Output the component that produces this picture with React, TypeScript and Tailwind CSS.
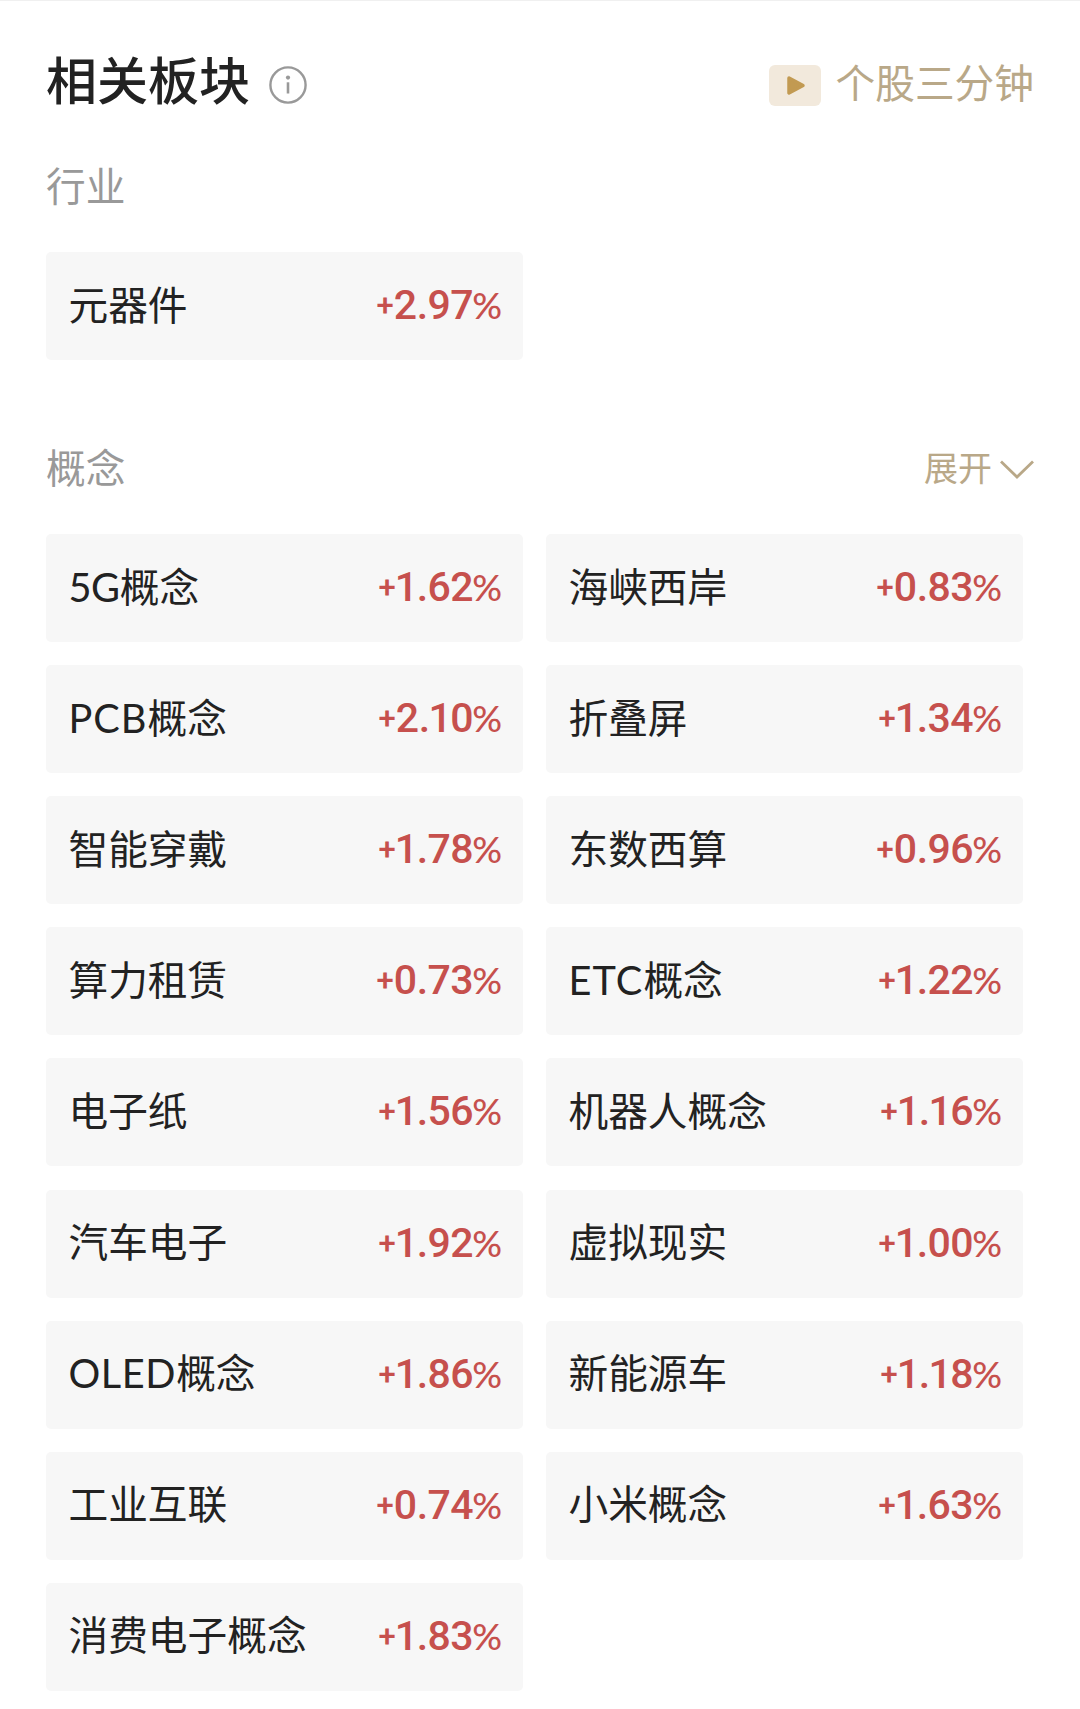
type Sector = { prefix?: string; name: string; change: string };

const industries: Sector[] = [{ name: '元器件', change: '2.97' }];

const concepts: Sector[] = [
  { prefix: '5G', name: '概念', change: '1.62' },
  { name: '海峡西岸', change: '0.83' },
  { prefix: 'PCB', name: '概念', change: '2.10' },
  { name: '折叠屏', change: '1.34' },
  { name: '智能穿戴', change: '1.78' },
  { name: '东数西算', change: '0.96' },
  { name: '算力租赁', change: '0.73' },
  { prefix: 'ETC', name: '概念', change: '1.22' },
  { name: '电子纸', change: '1.56' },
  { name: '机器人概念', change: '1.16' },
  { name: '汽车电子', change: '1.92' },
  { name: '虚拟现实', change: '1.00' },
  { prefix: 'OLED', name: '概念', change: '1.86' },
  { name: '新能源车', change: '1.18' },
  { name: '工业互联', change: '0.74' },
  { name: '小米概念', change: '1.63' },
  { name: '消费电子概念', change: '1.83' },
];

const prefixTracking: Record<string, string> = {
  '5G': 'tracking-[-0.4px]',
  PCB: 'tracking-[1px]',
  ETC: 'tracking-[1.1px]',
  OLED: 'tracking-[0.6px]',
};

function SectorCard({ prefix, name, change }: Sector) {
  return (
    <div className="flex h-[108px] items-center justify-between rounded-[5px] bg-[#f7f7f7] pr-[21px] pl-[22.5px] leading-[58px]">
      <span className="pb-[3px] text-[39.7px] text-[#222222]">
        {prefix && <span className={prefixTracking[prefix]}>{prefix}</span>}
        {name}
      </span>
      <span className="flex items-baseline pt-[2px] font-[Roboto,sans-serif] text-[#c6504d]">
        <span className="relative top-[-3px] text-[31px] font-medium">+</span>
        <span className="text-[41px] font-medium tracking-[-0.5px]">
          {change.split('').map((c, i) => (
            <span key={i} className={c === '1' ? 'mr-[-1px] ml-[-1px]' : ''}>
              {c}
            </span>
          ))}
        </span>
        <span className="ml-[-1px] font-[Lato,sans-serif] text-[37px] font-medium">%</span>
      </span>
    </div>
  );
}

function SectorGrid({ items }: { items: Sector[] }) {
  return (
    <div className="grid grid-cols-[477px_477px] gap-x-[23px] gap-y-[23.12px]">
      {items.map((s) => (
        <SectorCard key={(s.prefix ?? '') + s.name} {...s} />
      ))}
    </div>
  );
}

export default function App() {
  return (
    <main className="h-[1709px] w-[1080px] overflow-hidden border-t border-[#f0f0f0] bg-white pr-[46px] pl-[46px] font-[Lato,'Noto_Sans_CJK_SC',sans-serif]">
      <header className="mt-[42px] flex h-[76px] items-center justify-between">
        <div className="flex items-center">
          <h1 className="text-[51px] leading-[76px] font-medium text-[#222222]">相关板块</h1>
          <svg className="mt-[7px] ml-[18px]" width="40" height="40" viewBox="0 0 40 40" fill="none">
            <circle cx="20" cy="20" r="17.6" stroke="#999999" strokeWidth="2.4" />
            <circle cx="20" cy="12.6" r="2.1" fill="#999999" />
            <path d="M20 17.3V28.5" stroke="#999999" strokeWidth="2.6" />
          </svg>
        </div>
        <div className="flex items-center">
          <div className="mt-[8px] flex h-[41px] w-[52px] items-center justify-center rounded-[6px] bg-[#f2e9dc]">
            <svg className="ml-[3px]" width="20" height="21" viewBox="0 0 20 21">
              <path d="M3 3L17 10.5L3 18Z" fill="#c29a52" stroke="#c29a52" strokeWidth="3.5" strokeLinejoin="round" />
            </svg>
          </div>
          <span className="mt-[4px] ml-[15px] text-[39.7px] leading-[58px] text-[#b9a888]">个股三分钟</span>
        </div>
      </header>

      <h2 className="mt-[38px] mb-[37px] text-[39.7px] leading-[58px] text-[#999999]">行业</h2>
      <SectorGrid items={industries} />

      <div className="mt-[79px] mb-[37px] flex h-[58px] items-center justify-between">
        <h2 className="text-[39.7px] leading-[58px] text-[#999999]">概念</h2>
        <div className="flex items-center text-[#b9a888]">
          <span className="text-[34px] leading-[50px]">展开</span>
          <svg className="mt-[4px] ml-[8px]" width="34" height="20" viewBox="0 0 34 20" fill="none">
            <path d="M1 1.5L17 17L33 1.5" stroke="#b9a888" strokeWidth="2.8" />
          </svg>
        </div>
      </div>
      <SectorGrid items={concepts} />
    </main>
  );
}
